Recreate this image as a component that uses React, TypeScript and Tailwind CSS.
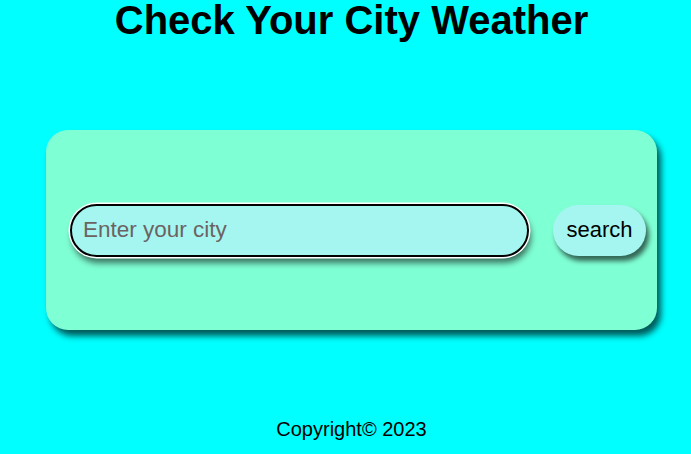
export default function App() {
    return (
        <div className="min-h-[454px] w-full bg-[#00ffff] font-['Liberation_Sans',Arial,sans-serif] text-black">
            <div className="flex flex-col items-center pl-[12px]">
                <h1 className="m-0 text-[40px] font-bold leading-[40px]">Check Your City Weather</h1>

                {/* search card */}
                <div className="mt-[90px] flex h-[200px] w-[611px] items-center rounded-[22px] bg-[#7fffd4] pl-[24px] pr-[11px] shadow-[4px_6px_6px_rgba(0,0,0,0.65)]">
                    <input
                        type="text"
                        placeholder="Enter your city"
                        className="h-[53px] w-[459px] rounded-full border-2 border-black bg-[#a5f6f0] pl-[11px] text-[22.5px] outline-none placeholder:text-[#6d6262] shadow-[0_0_0_1.5px_#ffffff,2px_6px_6px_rgba(0,0,0,0.55)]"
                    />
                    <button className="ml-[24px] h-[51px] w-[93px] rounded-full bg-[#a5f6f0] pb-[2px] text-[22px] text-black shadow-[3px_5px_5px_rgba(0,0,0,0.6)]">
                        search
                    </button>
                </div>

                <p className="mt-[84px] text-[20px]">Copyright© 2023</p>
            </div>
        </div>
    );
}
